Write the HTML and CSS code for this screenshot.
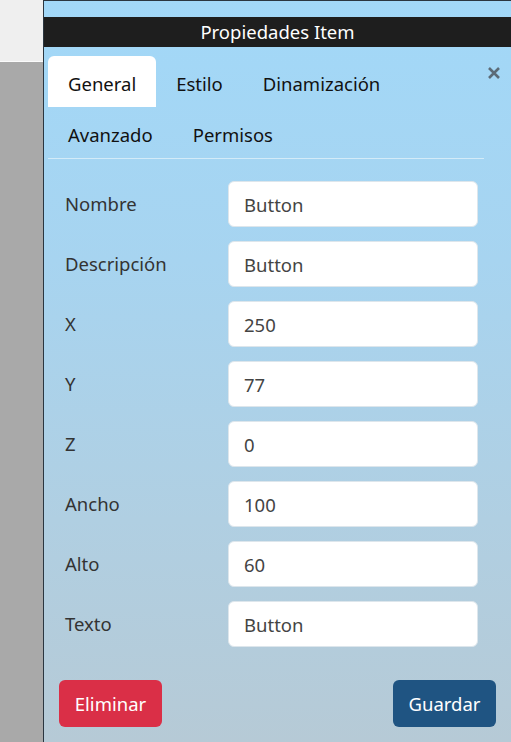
FILE: index.html
```html
<!DOCTYPE html>
<html lang="es">
<head>
<meta charset="utf-8">
<title>Propiedades Item</title>
<link rel="stylesheet" href="styles.css">
</head>
<body>
<div class="page">
  <aside class="side">
    <div class="side-top"></div>
    <div class="side-bottom"></div>
  </aside>
  <section class="panel">
    <header class="panel-title">Propiedades Item</header>
    <div class="tabbar">
      <nav class="tabs">
        <span class="tab active">General</span>
        <span class="tab">Estilo</span>
        <span class="tab">Dinamización</span>
        <span class="tab">Avanzado</span>
        <span class="tab">Permisos</span>
      </nav>
      <button class="close" type="button" aria-label="Cerrar">
        <svg width="14" height="14" viewBox="0 0 14 14"><path d="M2 2 L12 12 M12 2 L2 12" stroke="currentColor" stroke-width="2.6" stroke-linecap="butt"/></svg>
      </button>
    </div>
    <form class="form">
      <label class="row"><span class="label">Nombre</span><input class="input" value="Button"></label>
      <label class="row"><span class="label">Descripción</span><input class="input" value="Button"></label>
      <label class="row"><span class="label">X</span><input class="input" value="250"></label>
      <label class="row"><span class="label">Y</span><input class="input" value="77"></label>
      <label class="row"><span class="label">Z</span><input class="input" value="0"></label>
      <label class="row"><span class="label">Ancho</span><input class="input" value="100"></label>
      <label class="row"><span class="label">Alto</span><input class="input" value="60"></label>
      <label class="row"><span class="label">Texto</span><input class="input" value="Button"></label>
    </form>
    <div class="actions">
      <button class="btn btn-danger" type="button">Eliminar</button>
      <button class="btn btn-primary" type="button">Guardar</button>
    </div>
  </section>
</div>
</body>
</html>
```
FILE: styles.css
```css
* { box-sizing: border-box; }
html, body { margin: 0; height: 100%; }
body {
  font-family: "Segoe UI", "Noto Sans", "Open Sans", sans-serif;
  font-size: 18.5px;
  line-height: 1.5;
  color: #212529;
  overflow: hidden;
}
.page {
  display: flex;
  width: 511px;
  height: 742px;
}
.side {
  width: 43px;
  flex: none;
  display: flex;
  flex-direction: column;
}
.side-top {
  height: 62px;
  background: #efefef;
  border-bottom: 1px solid #fbfbfb;
}
.side-bottom {
  flex: 1;
  background: #a9a9a9;
}
.panel {
  flex: 1;
  min-width: 0;
  display: flex;
  flex-direction: column;
  border-left: 1px solid #2b3640;
  border-top: 1px solid #2b3640;
  background: linear-gradient(180deg, #a2d8f8 0%, #a7d4f0 35%, #b0cfe2 70%, #b6cad6 100%);
  padding-top: 16px;
}
.panel-title {
  height: 30px;
  background: #1e1e1e;
  color: #ffffff;
  text-align: center;
  font-size: 18.5px;
  line-height: 30px;
}
.tabbar {
  display: flex;
  align-items: flex-start;
  padding: 9px 7px 0 4px;
}
.tabs {
  flex: 1;
  min-width: 0;
  display: flex;
  flex-wrap: wrap;
  border-bottom: 1px solid #d3ebf8;
}
.tab {
  padding: 14px 20px 10px;
  color: #111;
  border-radius: 6px 6px 0 0;
  line-height: 27px;
}
.tab.active {
  background: #ffffff;
}
.close {
  flex: none;
  width: 20px;
  height: 20px;
  margin-top: 7px;
  padding: 0;
  border: 0;
  background: none;
  color: #5c6b77;
  display: flex;
  align-items: center;
  justify-content: center;
}
.form {
  display: flex;
  flex-direction: column;
  gap: 14px;
  padding: 22px 33px 0 21px;
  margin: 0;
  min-width: 0;
}
.row {
  display: flex;
  align-items: center;
  min-width: 0;
}
.label {
  width: 163px;
  flex: none;
  color: #333;
}
.input {
  flex: 1;
  width: 0;
  min-width: 0;
  height: 46px;
  padding: 0 15px;
  border: 1px solid #dde6ec;
  border-radius: 6px;
  background: #fff;
  font: inherit;
  color: #444;
}
.actions {
  display: flex;
  justify-content: space-between;
  padding: 33px 15px 0 15px;
}
.btn {
  width: 103px;
  height: 47px;
  border: 0;
  border-radius: 6px;
  color: #fff;
  font: inherit;
  padding: 0;
}
.btn-danger { background: #da2f47; }
.btn-primary { background: #1f5482; }
```
